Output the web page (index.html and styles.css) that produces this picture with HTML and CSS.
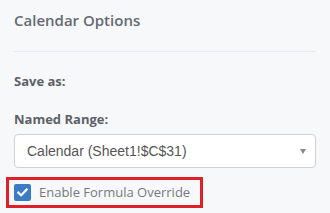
FILE: index.html
```html
<!DOCTYPE html>
<html>
<head>
<meta charset="utf-8">
<link rel="stylesheet" href="styles.css">
</head>
<body>
<div class="panel">
  <h1 class="title">Calendar Options</h1>
  <div class="divider"></div>
  <div class="label label-save">Save as:</div>
  <div class="label label-range">Named Range:</div>
  <div class="select">
    <span class="select-text">Calendar (Sheet1!$C$31)</span>
    <span class="caret"></span>
  </div>
  <div class="highlight">
    <span class="checkbox">
      <svg width="11" height="9" viewBox="0 0 11 9"><path d="M1.3 4.6 L4.2 7.3 L9.7 1.6" fill="none" stroke="#fff" stroke-width="2.2" stroke-linecap="square"/></svg>
    </span>
    <span class="check-label">Enable Formula Override</span>
  </div>
</div>
</body>
</html>
```

FILE: styles.css
```css
html, body {
  margin: 0;
  padding: 0;
  background: #f7f8fa;
}
.panel {
  padding: 10px 14px 0 14px;
  font-family: "Open Sans", "Liberation Sans", sans-serif;
}
.title {
  margin: 0;
  font-size: 15px;
  font-weight: 600;
  line-height: 21px;
  color: #666a70;
}
.divider {
  margin-top: 20px;
  height: 1px;
  background: #e5e7ea;
}
.label {
  font-size: 13px;
  font-weight: 700;
  line-height: 18px;
  color: #5d6166;
}
.label-save { margin-top: 20px; }
.label-range { margin-top: 20px; }
.select {
  margin-top: 6px;
  height: 34px;
  box-sizing: border-box;
  border: 1px solid #cfd1d4;
  border-radius: 4px;
  background: #fff;
  display: flex;
  align-items: center;
  justify-content: space-between;
  padding: 0 9px 0 12px;
}
.select-text {
  font-family: "Liberation Sans", Arial, sans-serif;
  font-size: 14px;
  color: #555;
}
.caret {
  width: 0;
  height: 0;
  border-left: 3px solid transparent;
  border-right: 3px solid transparent;
  border-top: 5px solid #888;
}
.highlight {
  margin-top: 9px;
  margin-left: -8px;
  display: inline-flex;
  align-items: center;
  border: 3px solid #e01f26;
  padding: 4px 10px 4px 5px;
}
.checkbox {
  width: 17px;
  height: 17px;
  border-radius: 2px;
  background: #3a7cc5;
  display: flex;
  align-items: center;
  justify-content: center;
}
.check-label {
  margin-left: 8px;
  font-size: 13px;
  line-height: 17px;
  color: #767a7f;
}
```
